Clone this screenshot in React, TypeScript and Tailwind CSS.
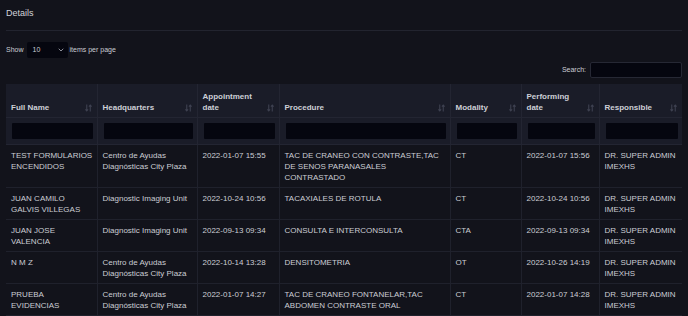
import { ChevronDown } from "lucide-react";

type Row = {
  name: string[];
  hq: string[];
  appt: string;
  proc: string[];
  modality: string;
  perf: string;
  resp: string[];
};

const rows: Row[] = [
  {
    name: ["TEST FORMULARIOS", "ENCENDIDOS"],
    hq: ["Centro de Ayudas", "Diagnósticas City Plaza"],
    appt: "2022-01-07 15:55",
    proc: ["TAC DE CRANEO CON CONTRASTE,TAC", "DE SENOS PARANASALES", "CONTRASTADO"],
    modality: "CT",
    perf: "2022-01-07 15:56",
    resp: ["DR. SUPER ADMIN", "IMEXHS"],
  },
  {
    name: ["JUAN CAMILO", "GALVIS VILLEGAS"],
    hq: ["Diagnostic Imaging Unit"],
    appt: "2022-10-24 10:56",
    proc: ["TACAXIALES DE ROTULA"],
    modality: "CT",
    perf: "2022-10-24 10:56",
    resp: ["DR. SUPER ADMIN", "IMEXHS"],
  },
  {
    name: ["JUAN JOSE", "VALENCIA"],
    hq: ["Diagnostic Imaging Unit"],
    appt: "2022-09-13 09:34",
    proc: ["CONSULTA E INTERCONSULTA"],
    modality: "CTA",
    perf: "2022-09-13 09:34",
    resp: ["DR. SUPER ADMIN", "IMEXHS"],
  },
  {
    name: ["N M Z"],
    hq: ["Centro de Ayudas", "Diagnósticas City Plaza"],
    appt: "2022-10-14 13:28",
    proc: ["DENSITOMETRIA"],
    modality: "OT",
    perf: "2022-10-26 14:19",
    resp: ["DR. SUPER ADMIN", "IMEXHS"],
  },
  {
    name: ["PRUEBA", "EVIDENCIAS"],
    hq: ["Centro de Ayudas", "Diagnósticas City Plaza"],
    appt: "2022-01-07 14:27",
    proc: ["TAC DE CRANEO FONTANELAR,TAC", "ABDOMEN CONTRASTE ORAL"],
    modality: "CT",
    perf: "2022-01-07 14:28",
    resp: ["DR. SUPER ADMIN", "IMEXHS"],
  },
];

const columns = [
  { label: ["Full Name"], width: "w-[91px]" },
  { label: ["Headquarters"], width: "w-[100px]" },
  { label: ["Appointment", "date"], width: "w-[82px]" },
  { label: ["Procedure"], width: "w-[171px]" },
  { label: ["Modality"], width: "w-[71px]" },
  { label: ["Performing", "date"], width: "w-[78px]" },
  { label: ["Responsible"], width: "w-[83px]" },
];

const SortIcon = () => (
  <svg width="7" height="8" viewBox="0 0 7 8" className="shrink-0 mb-[1px]">
    <path d="M1.75 0.5v6.5M0.4 5.4l1.35 1.6 1.35-1.6" stroke="#3e4150" strokeWidth="1.1" fill="none" />
    <path d="M5.25 7.5v-6.5M3.9 2.6l1.35-1.6 1.35 1.6" stroke="#3e4150" strokeWidth="1.1" fill="none" />
  </svg>
);

const Lines = ({ lines }: { lines: string[] }) => (
  <>
    {lines.map((l, i) => (
      <div key={i} className="whitespace-nowrap">
        {l}
      </div>
    ))}
  </>
);

const TD = ({ children, last }: { children: React.ReactNode; last?: boolean }) => (
  <td className={`align-top px-[5px] pt-[5px] pb-[4px] ${last ? "" : "border-r border-[#1f212c]"}`}>{children}</td>
);

const App = () => {
  return (
    <div className="min-h-screen bg-[#12131b] px-[6px] font-['Liberation_Sans',Arial,sans-serif] text-[#cbcdd4]">
      <div className="h-[31px] border-b border-[#22242f] flex items-center pb-[3px] text-[9px] text-[#d2d4da]">
        Details
      </div>

      <div className="mt-[11px] h-[16px] flex items-center text-[7px]">
        <span>Show</span>
        <div className="ml-[3px] mr-[2px] w-[41px] h-[16px] rounded-[2px] bg-[#05060f] flex items-center justify-between pl-[6px] pr-[3px]">
          <span>10</span>
          <ChevronDown size={8} strokeWidth={2.5} className="text-[#a8aab4]" />
        </div>
        <span>items per page</span>
      </div>

      <div className="mt-[4px] h-[16px] flex items-center justify-end text-[7px]">
        <span className="mr-[4px]">Search:</span>
        <div className="w-[92px] h-[16px] rounded-[2px] bg-[#05060f] border border-[#262834]" />
      </div>

      <table className="mt-[6px] w-[676px] table-fixed border-collapse text-[8px] leading-[11px]">
        <colgroup>
          {columns.map((c, i) => (
            <col key={i} className={c.width} />
          ))}
        </colgroup>
        <thead className="bg-[#1a1c28]">
          <tr className="border-b border-[#232532]">
            {columns.map((c, i) => (
              <th
                key={i}
                className={`h-[33px] px-[5px] pt-[6px] pb-[4px] align-bottom text-left font-bold text-[#cdcfd6] ${
                  i < columns.length - 1 ? "border-r border-[#232532]" : ""
                }`}
              >
                <div className="flex items-end justify-between">
                  <div>
                    <Lines lines={c.label} />
                  </div>
                  <SortIcon />
                </div>
              </th>
            ))}
          </tr>
          <tr className="border-b border-[#232532]">
            {columns.map((_, i) => (
              <th
                key={i}
                className={`h-[26px] pl-[6px] pr-[4px] pt-[5px] pb-[5px] ${
                  i < columns.length - 1 ? "border-r border-[#232532]" : ""
                }`}
              >
                <div className="h-[16px] w-full bg-[#05060f] rounded-[1px]" />
              </th>
            ))}
          </tr>
        </thead>
        <tbody>
          {rows.map((r, i) => (
            <tr key={i} className="border-b border-[#1f212c]">
              <TD>
                <Lines lines={r.name} />
              </TD>
              <TD>
                <Lines lines={r.hq} />
              </TD>
              <TD>{r.appt}</TD>
              <TD>
                <Lines lines={r.proc} />
              </TD>
              <TD>{r.modality}</TD>
              <TD>{r.perf}</TD>
              <TD last>
                <Lines lines={r.resp} />
              </TD>
            </tr>
          ))}
        </tbody>
      </table>
    </div>
  );
};

export default App;
